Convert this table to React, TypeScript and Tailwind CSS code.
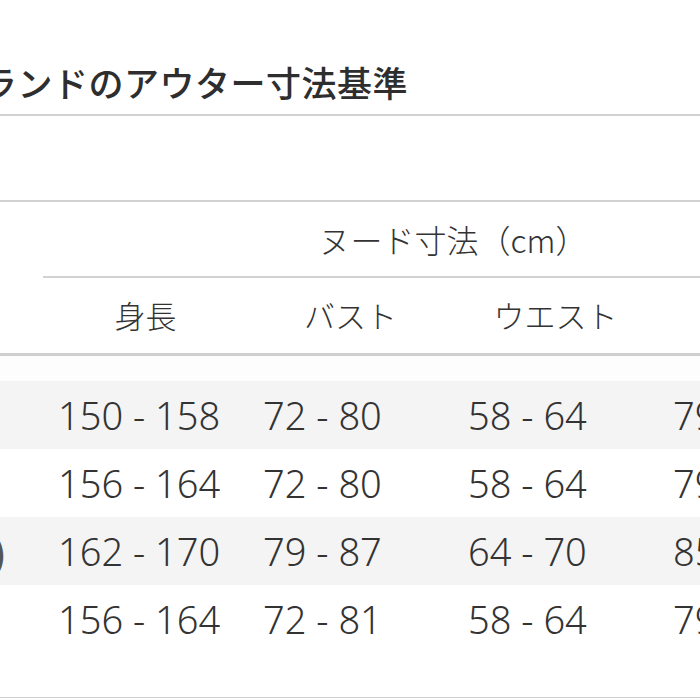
const rows = [
  { label: "", cells: ["150 - 158", "72 - 80", "58 - 64", "79 - 87"], shaded: true },
  { label: "", cells: ["156 - 164", "72 - 80", "58 - 64", "79 - 87"], shaded: false },
  { label: ")", cells: ["162 - 170", "79 - 87", "64 - 70", "85 - 93"], shaded: true },
  { label: "", cells: ["156 - 164", "72 - 81", "58 - 64", "79 - 87"], shaded: false },
];

const heads = ["身長", "バスト", "ウエスト", "ヒップ"];

const jp = "font-['Noto_Sans_CJK_JP','Noto_Sans',sans-serif]";
const num = "font-['Noto_Sans','Noto_Sans_CJK_JP',sans-serif]";

export default function App() {
  return (
    <div className={`w-[700px] h-[700px] overflow-hidden bg-white text-[#333] ${jp}`}>
      {/* title, cut off at the left like the screenshot */}
      <div className="h-[114px] pt-[62px]">
        <h1 className="-ml-[18px] whitespace-nowrap text-[35px] tracking-[0.5px] leading-[40px] font-medium text-[#2e2e2e]">
          ランドのアウター寸法基準
        </h1>
      </div>
      <div className="h-[2px] bg-[#d2d2d2]" />

      <div className="h-[84px]" />
      <div className="h-[2px] bg-[#d2d2d2]" />

      <div className="w-[863px]">
        <div className="grid grid-cols-[43px_820px]">
          <div />
          <div className="h-[74px] flex items-center justify-center text-[32px] font-light whitespace-nowrap">
            ヌード寸法（cm）
          </div>
        </div>
        <div className="ml-[43px] h-[2px] bg-[#d2d2d2]" />
        <div className="grid grid-cols-[43px_205px_205px_205px_205px] h-[75px] items-center">
          <div />
          {heads.map((h) => (
            <div key={h} className="text-center text-[31px] font-light whitespace-nowrap">{h}</div>
          ))}
        </div>
      </div>
      <div className="h-[3px] bg-[#cfcfcf]" />
      <div className="h-[25px] bg-[#fdfdfd]" />

      <div className="w-[863px]">
        {rows.map((r, i) => (
          <div
            key={i}
            className={`grid grid-cols-[43px_205px_205px_205px_205px] h-[68px] items-center ${r.shaded ? "bg-[#f4f4f4]" : "bg-white"}`}
          >
            <div className={`flex justify-end pr-[38px] text-[44px] font-normal text-[#555] ${num}`}>{r.label}</div>
            {r.cells.map((c, j) => (
              <div key={j} className={`pl-[15px] whitespace-nowrap text-[38px] tabular-nums font-light text-[#333] ${num}`}>{c}</div>
            ))}
          </div>
        ))}
      </div>
      <div className="h-[44px]" />
      <div className="h-px bg-[#cfcfcf]" />
    </div>
  );
}
